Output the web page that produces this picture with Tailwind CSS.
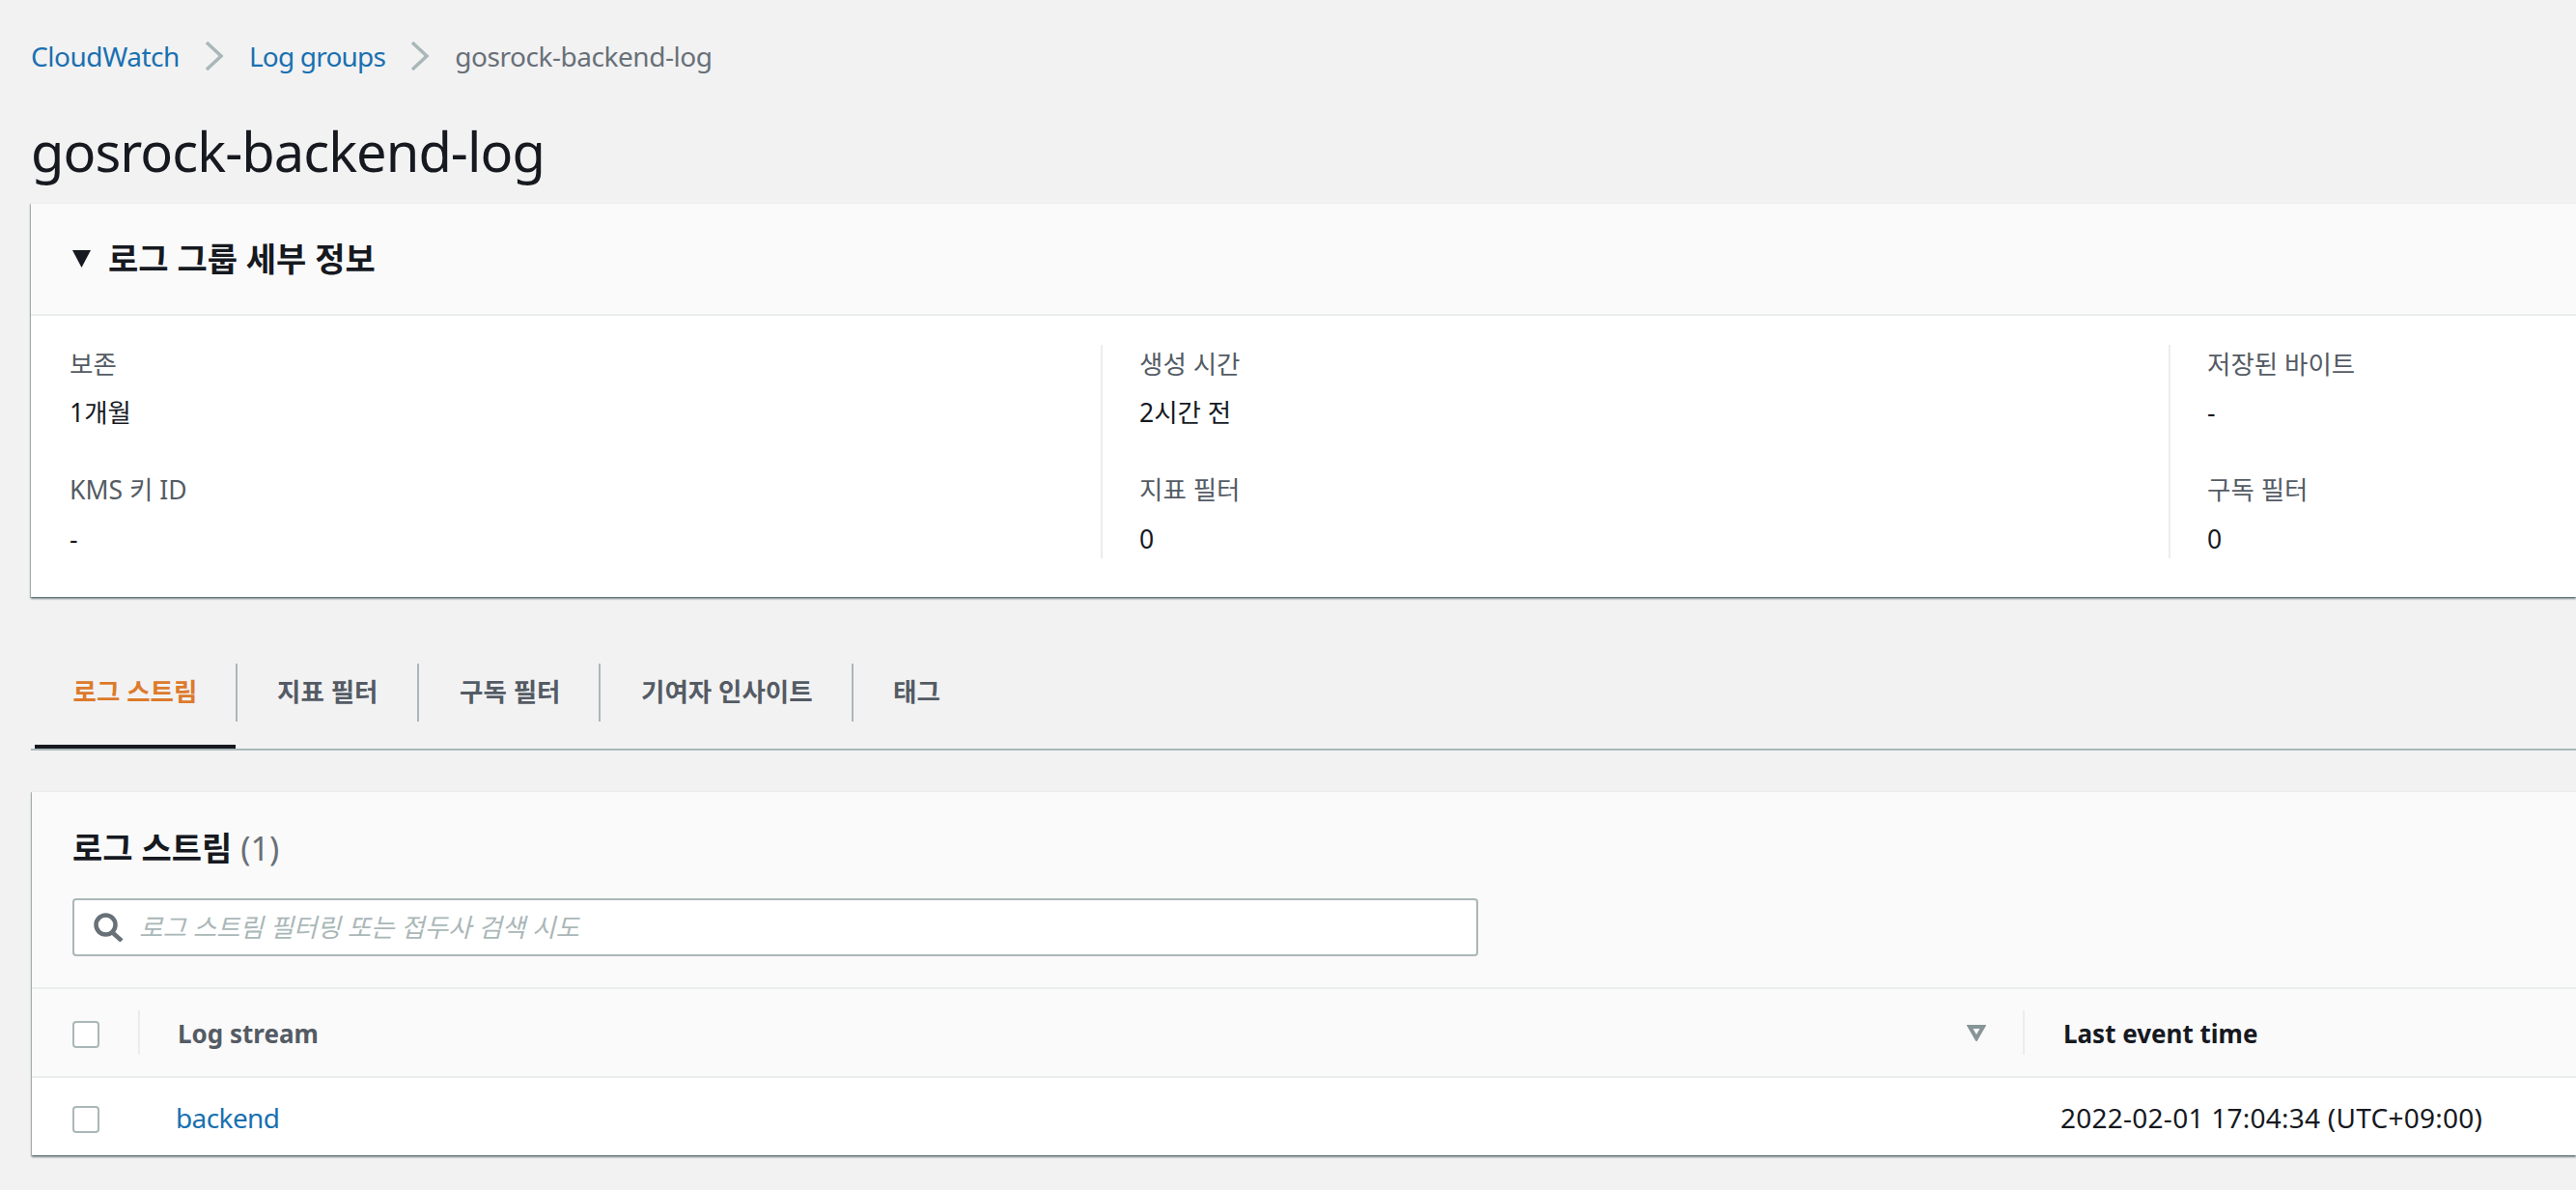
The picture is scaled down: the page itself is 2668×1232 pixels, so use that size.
<!DOCTYPE html>
<html lang="ko">
<head>
<meta charset="utf-8">
<script src="https://cdn.jsdelivr.net/npm/@tailwindcss/browser@4"></script>
<title>gosrock-backend-log</title>
</head>
<body class="m-0 h-[1232px] w-[2668px] overflow-hidden bg-[#f2f2f3] text-[#16191f] font-['Noto_Sans','Noto_Sans_CJK_KR',sans-serif]">
<div class="flex flex-col pl-[32px]">
  <nav class="flex h-[116px] items-center text-[28px] leading-[40px] tracking-[-0.45px]">
    <a class="text-[#1a70b0]">CloudWatch</a>
    <svg class="mx-[26px] h-[30px] w-[20px]" viewBox="0 0 20 30" fill="none" stroke="#aab7b8" stroke-width="3.5"><path d="M2 1 L17 15 L2 29"/></svg>
    <a class="tracking-[-0.8px] text-[#1a70b0]">Log groups</a>
    <svg class="mx-[26px] h-[30px] w-[20px]" viewBox="0 0 20 30" fill="none" stroke="#aab7b8" stroke-width="3.5"><path d="M2 1 L17 15 L2 29"/></svg>
    <span class="text-[#687078]">gosrock-backend-log</span>
  </nav>
  <h1 class="h-[94px] text-[56px] leading-[80px] font-normal tracking-[-0.95px]">gosrock-backend-log</h1>

  <section class="bg-white border-t border-[#eaeded] shadow-[0_2px_2px_0_rgba(0,28,36,0.5),-1px_1px_1px_0_rgba(0,28,36,0.2)]">
    <header class="flex h-[116px] items-center border-b-2 border-[#eaeded] bg-[#fafafa] pl-[43px]">
      <svg class="mr-[18px] h-[18px] w-[19px]" viewBox="0 0 19 18" fill="#16191f"><path d="M0 0 H19 L9.5 18 Z"/></svg>
      <h2 class="text-[34px] leading-[44px] font-bold">로그 그룹 세부 정보</h2>
    </header>
    <div class="flex pt-[30px] pb-[40px] text-[26.5px] leading-[40px]">
      <div class="w-[1108px] pl-[40px]">
        <p class="h-[40px] text-[#545b64]">보존</p>
        <p class="mt-[10px] h-[40px]">1개월</p>
        <p class="mt-[40px] h-[40px] text-[#545b64]">KMS 키 ID</p>
        <p class="mt-[11px] h-[40px]">-</p>
      </div>
      <div class="w-[1106px] border-l-2 border-[#eaeded] pl-[38px]">
        <p class="h-[40px] text-[#545b64]">생성 시간</p>
        <p class="mt-[10px] h-[40px]">2시간 전</p>
        <p class="mt-[40px] h-[40px] text-[#545b64]">지표 필터</p>
        <p class="mt-[11px] h-[40px]">0</p>
      </div>
      <div class="flex-1 border-l-2 border-[#eaeded] pl-[38px]">
        <p class="h-[40px] text-[#545b64]">저장된 바이트</p>
        <p class="mt-[10px] h-[40px]">-</p>
        <p class="mt-[40px] h-[40px] text-[#545b64]">구독 필터</p>
        <p class="mt-[11px] h-[40px]">0</p>
      </div>
    </div>
  </section>

  <div class="mt-[69px] flex h-[90px] border-b-2 border-[#aab7b8] pl-[4px] text-[26.5px] font-bold text-[#545b64]">
    <div class="relative -mb-[2px] h-[88px] w-[208px] border-b-4 border-[#16191f] text-[#dd7a2b]">
      <div class="flex h-[60px] items-center justify-center">로그 스트림</div>
    </div>
    <div class="flex h-[60px] w-[188px] items-center border-l-2 border-[#aab7b8] pl-[41px]">지표 필터</div>
    <div class="flex h-[60px] w-[188px] items-center border-l-2 border-[#aab7b8] pl-[42px]">구독 필터</div>
    <div class="flex h-[60px] w-[262px] items-center border-l-2 border-[#aab7b8] pl-[42px]">기여자 인사이트</div>
    <div class="flex h-[60px] items-center border-l-2 border-[#aab7b8] pl-[41px]">태그</div>
  </div>

  <section class="ml-px mt-[42px] bg-white border-t border-[#eaeded] shadow-[0_2px_2px_0_rgba(0,28,36,0.5),-1px_1px_1px_0_rgba(0,28,36,0.2)]">
    <div class="h-[204px] border-b-2 border-[#eaeded] bg-[#fafafa] pl-[42px]">
      <h2 class="flex h-[110px] items-center gap-[9px] pt-[6px] text-[34px] font-bold">로그 스트림 <span class="font-normal text-[#687078]">(1)</span></h2>
      <div class="flex h-[60px] w-[1456px] items-center rounded-[4px] border-2 border-[#aab7b8] bg-white pl-[20px]">
        <svg class="h-[30px] w-[31px] shrink-0" viewBox="0 0 31 30" fill="none" stroke="#687078" stroke-width="4.5"><circle cx="12.5" cy="12.5" r="10"/><path d="M19 20 L29 29"/></svg>
        <span class="ml-[16px] pt-[2px] text-[26.5px] italic text-[#aab7b8]">로그 스트림 필터링 또는 접두사 검색 시도</span>
      </div>
    </div>
    <div class="flex h-[92px] items-center border-b-2 border-[#eaeded] bg-[#fafafa] text-[26px] font-bold">
      <div class="w-[110px] pl-[42px] pt-[3px]"><div class="h-[28px] w-[28px] rounded-[4px] border-2 border-[#aab7b8] bg-white"></div></div>
      <div class="flex h-[46px] w-[1952px] items-center justify-between border-l-2 border-[#eaeded] pl-[39px] pr-[38px] text-[#545b64]">
        <span class="pt-[2px]">Log stream</span>
        <svg class="h-[17px] w-[20px]" viewBox="0 0 20 17" fill="none" stroke="#879596" stroke-width="4"><path d="M3 2 H17 L10 14 Z"/></svg>
      </div>
      <div class="flex h-[46px] flex-1 items-center border-l-2 border-[#eaeded] pl-[40px] pt-[2px]">Last event time</div>
    </div>
    <div class="flex h-[80px] items-center text-[28px]">
      <div class="w-[110px] pl-[42px] pt-[5px]"><div class="h-[28px] w-[28px] rounded-[4px] border-2 border-[#aab7b8] bg-white"></div></div>
      <div class="w-[1952px] pl-[39px] pt-[2px] tracking-[-0.6px] text-[#1a70b0]">backend</div>
      <div class="pl-[39px] pt-[2px] tracking-[0.25px]">2022-02-01 17:04:34 (UTC+09:00)</div>
    </div>
  </section>
</div>
</body>
</html>
